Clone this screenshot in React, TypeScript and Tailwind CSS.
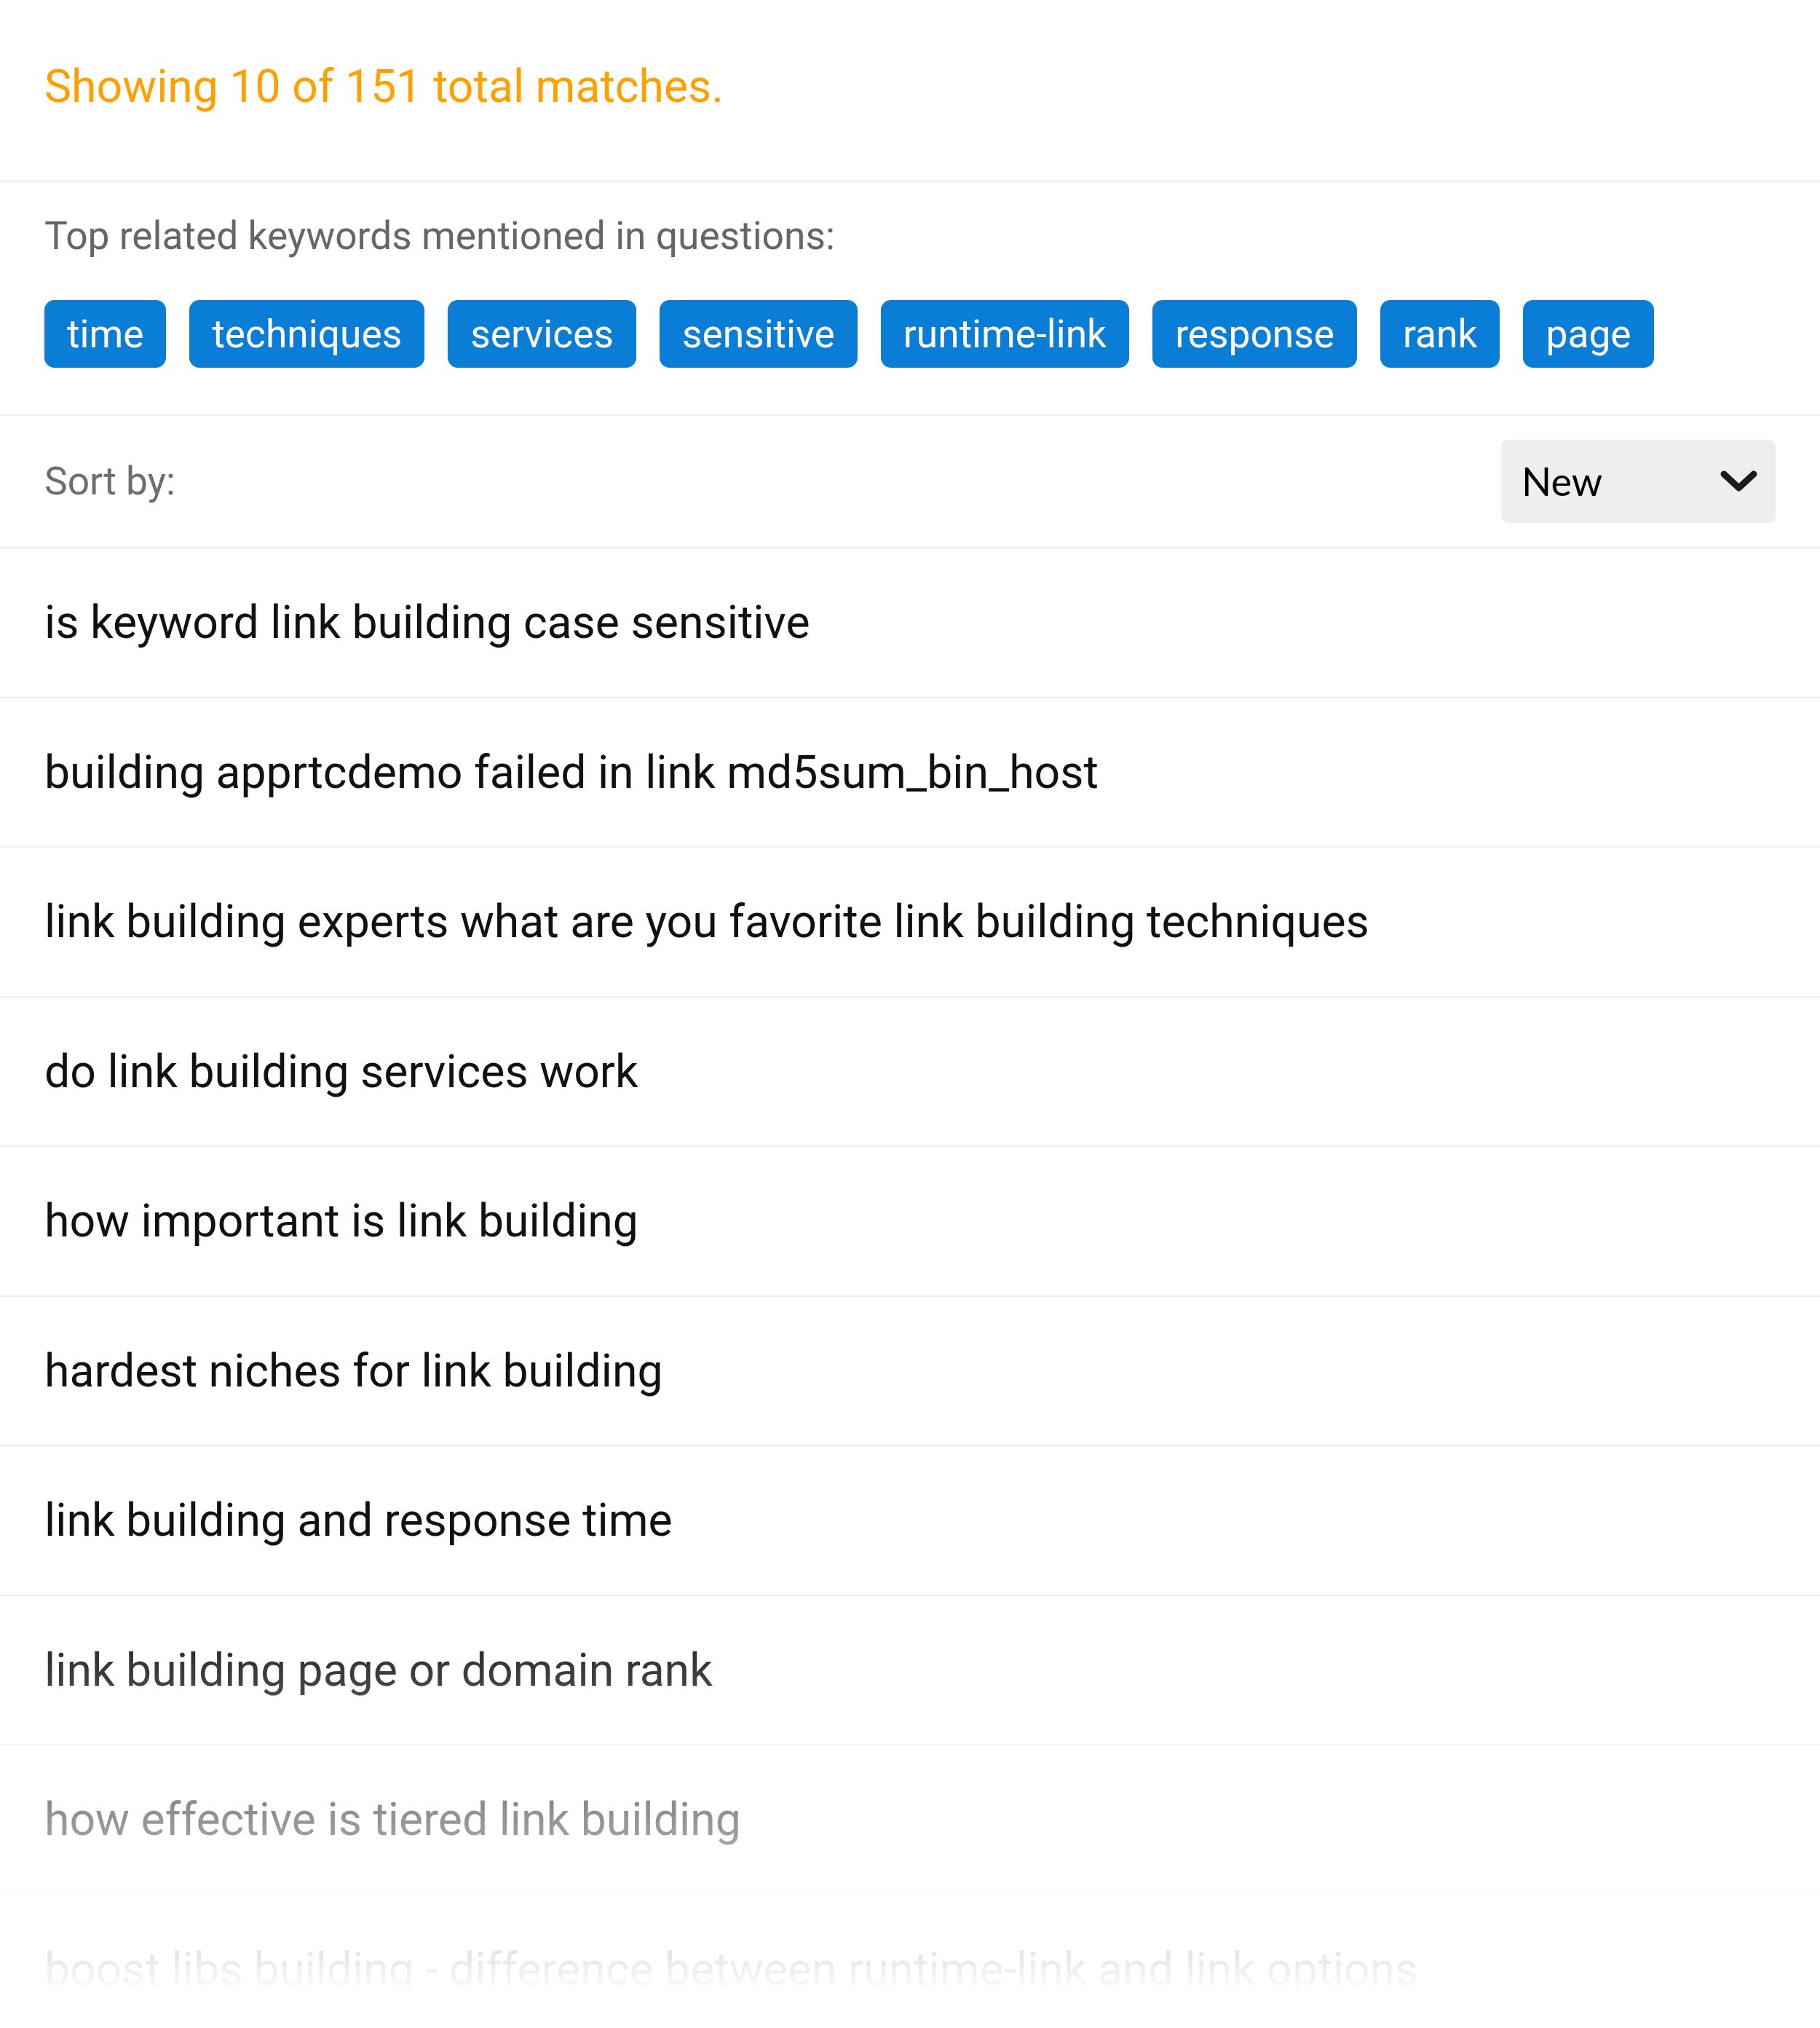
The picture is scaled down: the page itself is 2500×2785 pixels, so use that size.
import React from "react";

const keywords = ["time", "techniques", "services", "sensitive", "runtime-link", "response", "rank", "page"];

const questions = [
  "is keyword link building case sensitive",
  "building apprtcdemo failed in link md5sum_bin_host",
  "link building experts what are you favorite link building techniques",
  "do link building services work",
  "how important is link building",
  "hardest niches for link building",
  "link building and response time",
  "link building page or domain rank",
  "how effective is tiered link building",
  "boost libs building - difference between runtime-link and link options",
];

export default function App() {
  return (
    <div
      className="relative h-[2785px] w-full overflow-hidden bg-white"
      style={{ fontFamily: "Roboto, 'Liberation Sans', sans-serif" }}
    >
      <div className="border-b-2 border-[#eeeeee] px-[61px] pt-[81px] pb-[92px]">
        <p className="text-[62.5px] leading-[75px] text-[#ffa000]">Showing 10 of 151 total matches.</p>
      </div>

      <div className="border-b-2 border-[#eeeeee] px-[61px] pt-[43px] pb-[64px]">
        <p className="text-[53.3px] leading-[62px] text-[#666666]">Top related keywords mentioned in questions:</p>
        <div className="mt-[57px] flex flex-wrap gap-[32px]">
          {keywords.map((k) => (
            <span
              key={k}
              className="flex h-[93px] items-center rounded-[14px] bg-[#0a7ed6] px-[31px] text-[53.3px] leading-[62px] text-white"
            >
              {k}
            </span>
          ))}
        </div>
      </div>

      <div className="flex h-[182px] items-center justify-between border-b-2 border-[#eeeeee] px-[61px]">
        <span className="text-[53.3px] leading-[62px] text-[#6e6e6e]">Sort by:</span>
        <div className="flex h-[114px] w-[377px] items-center justify-between rounded-[10px] bg-[#eeeeee] pl-[28px] pr-[25px]">
          <span
            className="text-[54px] leading-[66px] text-black"
            style={{ fontFamily: "Lato, 'Noto Sans', sans-serif" }}
          >
            New
          </span>
          <svg width="51" height="32" viewBox="0 0 51 32" fill="none">
            <polyline
              points="5,6 25.5,25 46,6"
              stroke="#1a1a1a"
              strokeWidth="9"
              strokeLinecap="round"
              strokeLinejoin="round"
            />
          </svg>
        </div>
      </div>

      <div>
        {questions.map((q) => (
          <div
            key={q}
            className="flex h-[205.5px] items-center border-b-2 border-[#eeeeee] px-[61px]"
          >
            <span className="text-[62.5px] leading-[75px] text-[#111111]">{q}</span>
          </div>
        ))}
      </div>

      <div className="pointer-events-none absolute inset-x-0 top-[2200px] h-[585px] bg-[linear-gradient(to_bottom,rgba(255,255,255,0)_0px,#ffffff_540px)]" />
    </div>
  );
}
